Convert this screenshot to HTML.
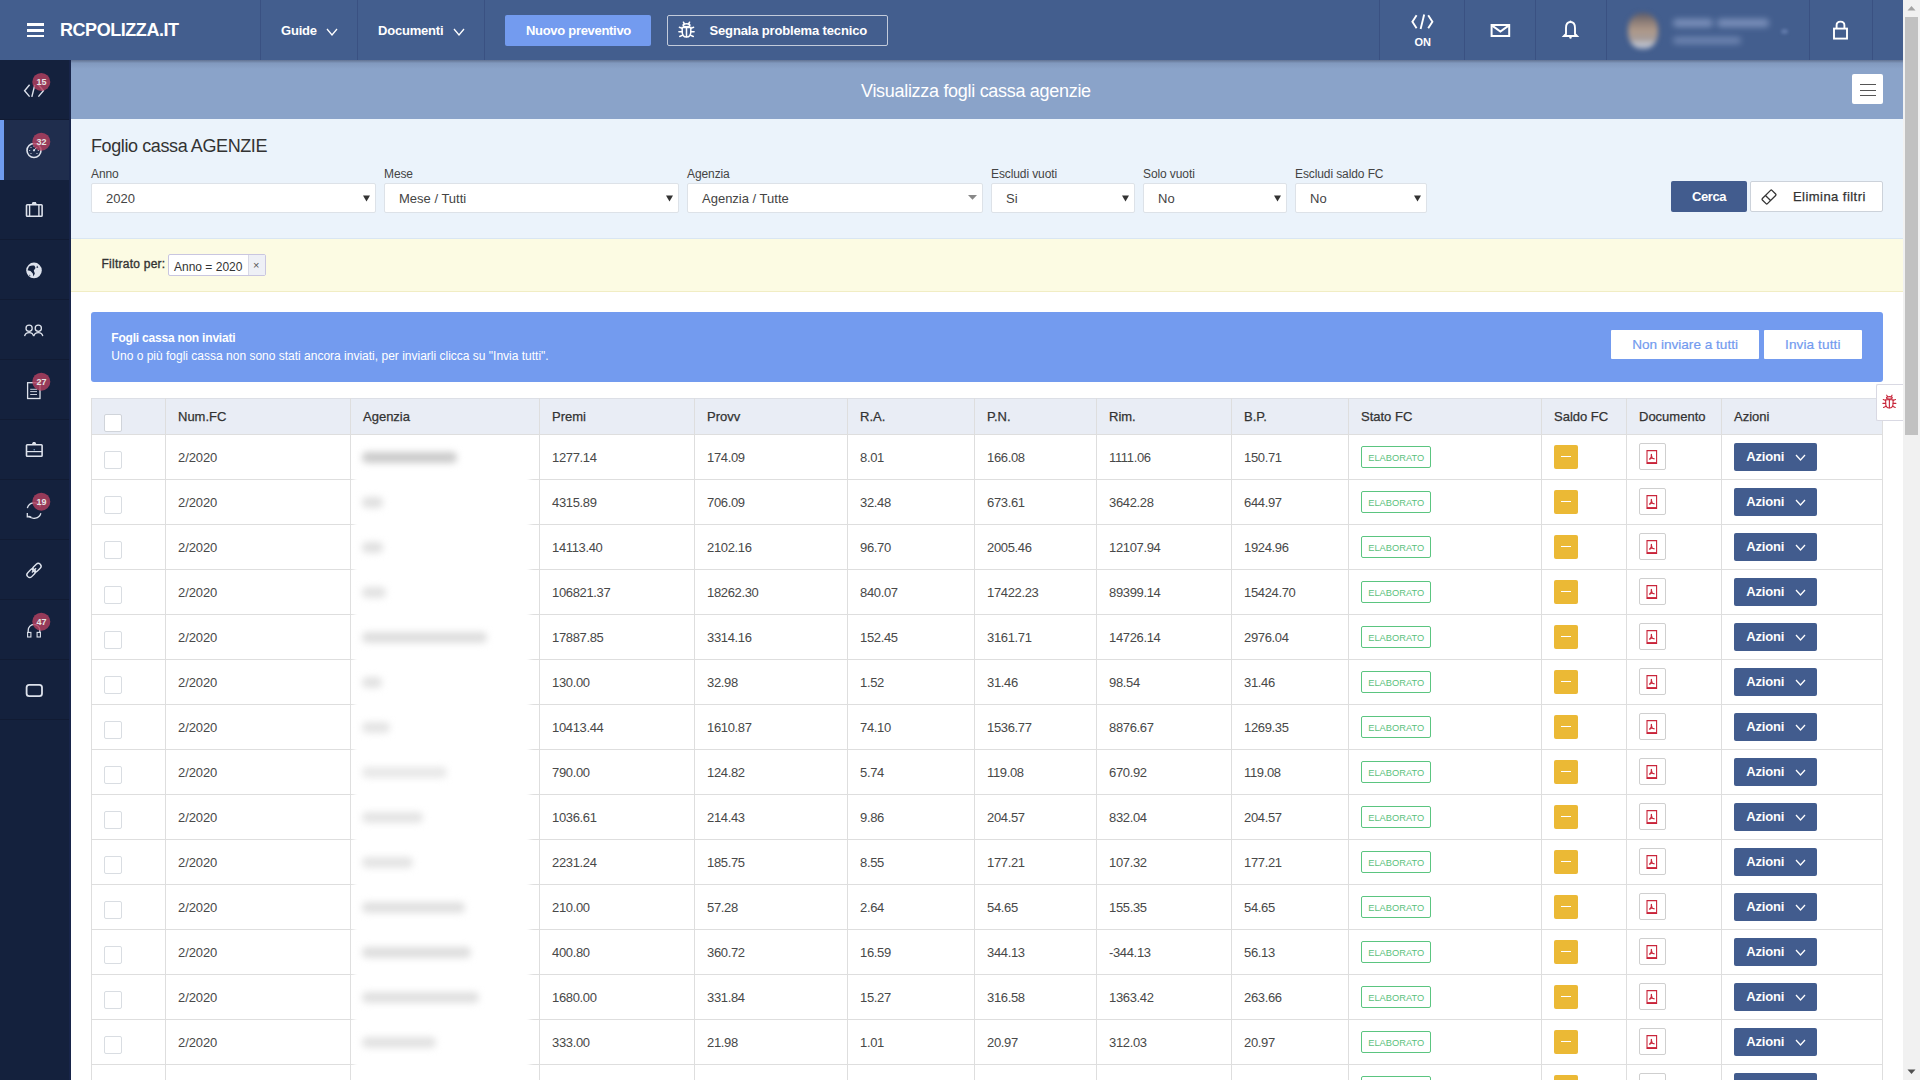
<!DOCTYPE html><html><head><meta charset="utf-8"><style>
*{box-sizing:border-box;margin:0;padding:0}
html,body{width:1920px;height:1080px;overflow:hidden;background:#fff;font-family:"Liberation Sans", sans-serif;}
.a{position:absolute}
.t{position:absolute;white-space:nowrap;line-height:1}
</style></head><body><div class="a" style="left:0px;top:0px;width:1903px;height:60px;background:#435e8e"></div><div class="a" style="left:260px;top:0px;width:1px;height:60px;background:#3a5182"></div><div class="a" style="left:357px;top:0px;width:1px;height:60px;background:#3a5182"></div><div class="a" style="left:484px;top:0px;width:1px;height:60px;background:#3a5182"></div><div class="a" style="left:1379px;top:0px;width:1px;height:60px;background:#3a5182"></div><div class="a" style="left:1464px;top:0px;width:1px;height:60px;background:#3a5182"></div><div class="a" style="left:1535px;top:0px;width:1px;height:60px;background:#3a5182"></div><div class="a" style="left:1606px;top:0px;width:1px;height:60px;background:#3a5182"></div><div class="a" style="left:1809px;top:0px;width:1px;height:60px;background:#3a5182"></div><div class="a" style="left:1872px;top:0px;width:1px;height:60px;background:#3a5182"></div><div class="a" style="left:27px;top:23px;width:17px;height:2.8px;background:#fff"></div><div class="a" style="left:27px;top:29px;width:17px;height:2.8px;background:#fff"></div><div class="a" style="left:27px;top:34.5px;width:17px;height:2.8px;background:#fff"></div><div class="t" style="left:60px;top:21.15px;font-size:18px;color:#fff;font-weight:bold;letter-spacing:-0.45px;">RCPOLIZZA.IT</div><div class="t" style="left:281px;top:24.24px;font-size:13px;color:#fff;font-weight:bold;letter-spacing:-0.2px;">Guide</div><div class="t" style="left:378px;top:24.24px;font-size:13px;color:#fff;font-weight:bold;letter-spacing:-0.2px;">Documenti</div><svg class="a" style="left:326px;top:27.5px" width="12" height="8" viewBox="-1 -1 12 8"><path d="M0 0 L5.0 6 L10 0" fill="none" stroke="#fff" stroke-width="1.3"/></svg><svg class="a" style="left:453px;top:27.5px" width="12" height="8" viewBox="-1 -1 12 8"><path d="M0 0 L5.0 6 L10 0" fill="none" stroke="#fff" stroke-width="1.3"/></svg><div class="a" style="left:505px;top:15px;width:146px;height:31px;background:#739bef;border-radius:2px"></div><div class="t" style="left:526px;top:24.24px;font-size:13px;color:#fff;font-weight:bold;letter-spacing:-0.3px;">Nuovo preventivo</div><div class="a" style="left:667px;top:15px;width:221px;height:31px;border:1px solid #c3cbdb;border-radius:2px"></div><div class="t" style="left:709.5px;top:24.24px;font-size:13px;color:#fff;font-weight:bold;letter-spacing:-0.15px;">Segnala problema tecnico</div><svg class="a" style="left:0;top:0" width="1903" height="60" viewBox="0 0 1903 60"><g transform="translate(678.5 20.8) scale(1.0)" fill="none" stroke="#fff" stroke-width="1.5" stroke-linecap="round"><ellipse cx="8" cy="4.5" rx="3.4" ry="1.5"/><path d="M4.9 1.4 L6 3.2 M11.1 1.4 L10 3.2"/><path d="M3.7 6.7 H12.3 V11 C12.3 14.5 10.5 16.3 8 16.3 C5.5 16.3 3.7 14.5 3.7 11 Z"/><line x1="8" y1="6.8" x2="8" y2="16"/><path d="M3.7 7.6 L0.9 6.4 M12.3 7.6 L15.1 6.4 M3.7 10.9 L0.4 10.9 M12.3 10.9 L15.6 10.9 M4.2 14.3 L1.2 15.7 M11.8 14.3 L14.8 15.7"/></g><g fill="none" stroke="#fff" stroke-width="1.9"><polyline points="1416.6,15.2 1412.4,21.7 1416.6,28.2"/><line x1="1424.2" y1="14.5" x2="1420.6" y2="29"/><polyline points="1428.2,15.2 1432.4,21.7 1428.2,28.2"/></g><g fill="none" stroke="#fff" stroke-width="2"><rect x="1491.6" y="25" width="17.6" height="11"/><polyline points="1491.8,25.4 1500.4,31.6 1509,25.4"/></g><g fill="none" stroke="#fff" stroke-width="1.9"><path d="M1564 36 L1566 34 L1566 28 C1566 23.5 1568 22 1570.5 22 C1573 22 1575 23.5 1575 28 L1575 34 L1577 36 Z"/><circle cx="1570.5" cy="37.6" r="1.2" fill="#fff" stroke="none"/><circle cx="1570.5" cy="21.4" r="1" fill="#fff" stroke="none"/></g><g fill="none" stroke="#fff" stroke-width="1.9"><rect x="1834" y="28.6" width="13" height="10"/><path d="M1836.6 28.6 V25.2 C1836.6 22.6 1838.3 21.6 1840.5 21.6 C1842.7 21.6 1844.4 22.6 1844.4 25.2 V28.6"/></g></svg><div class="t" style="left:1414.5px;top:36.56px;font-size:11px;color:#fff;font-weight:bold;">ON</div><div class="a" style="left:1628px;top:13px;width:30px;height:36px;border-radius:45%;background:linear-gradient(#5f5c68 0%,#8f7f78 25%,#b09a8a 50%,#a49a98 72%,#c3c6cf 88%,#9ea8c0 100%);filter:blur(2.6px)"></div><div class="a" style="left:1673px;top:19px;width:40px;height:8px;background:#8599c2;filter:blur(3px);border-radius:4px;opacity:0.85"></div><div class="a" style="left:1717px;top:19px;width:52px;height:8px;background:#8599c2;filter:blur(3px);border-radius:4px;opacity:0.85"></div><div class="a" style="left:1673px;top:37px;width:68px;height:7px;background:#778db8;filter:blur(3px);border-radius:4px;opacity:0.85"></div><div class="a" style="left:1781px;top:29px;width:7px;height:5px;background:#5f78a8;filter:blur(1.5px);border-radius:3px"></div><div class="a" style="left:0px;top:60px;width:71px;height:1020px;background:#14213d"></div><div class="a" style="left:0px;top:119px;width:71px;height:1px;background:#111b33"></div><div class="a" style="left:0px;top:179px;width:71px;height:1px;background:#111b33"></div><div class="a" style="left:0px;top:239px;width:71px;height:1px;background:#111b33"></div><div class="a" style="left:0px;top:299px;width:71px;height:1px;background:#111b33"></div><div class="a" style="left:0px;top:359px;width:71px;height:1px;background:#111b33"></div><div class="a" style="left:0px;top:419px;width:71px;height:1px;background:#111b33"></div><div class="a" style="left:0px;top:479px;width:71px;height:1px;background:#111b33"></div><div class="a" style="left:0px;top:539px;width:71px;height:1px;background:#111b33"></div><div class="a" style="left:0px;top:599px;width:71px;height:1px;background:#111b33"></div><div class="a" style="left:0px;top:659px;width:71px;height:1px;background:#111b33"></div><div class="a" style="left:0px;top:719px;width:71px;height:1px;background:#111b33"></div><div class="a" style="left:0px;top:120px;width:71px;height:60px;background:#1f2d4d"></div><div class="a" style="left:0px;top:120px;width:4px;height:60px;background:#6f9cf0"></div><div class="a" style="left:69px;top:60px;width:2px;height:1020px;background:#18254a"></div><svg class="a" style="left:0;top:0" width="71" height="720" viewBox="0 0 71 720"><polyline points="29.6,84.8 24.6,90.7 29.6,96.6" fill="none" stroke="#dde2ec" stroke-width="1.4"/><line x1="34.8" y1="84.8" x2="31.8" y2="96.8" fill="none" stroke="#dde2ec" stroke-width="1.4"/><polyline points="38.4,84.8 43.4,90.7 38.4,96.6" fill="none" stroke="#dde2ec" stroke-width="1.4"/><circle cx="34" cy="150.5" r="7" fill="none" stroke="#dde2ec" stroke-width="1.6"/><circle cx="34" cy="150.3" r="1.1" fill="#dde2ec"/><circle cx="29.7" cy="150.5" r="0.6" fill="#dde2ec"/><circle cx="38.3" cy="150.5" r="0.6" fill="#dde2ec"/><circle cx="34" cy="146.2" r="0.6" fill="#dde2ec"/><circle cx="31" cy="147.5" r="0.6" fill="#dde2ec"/><circle cx="37" cy="147.5" r="0.6" fill="#dde2ec"/><circle cx="31" cy="153.5" r="0.6" fill="#dde2ec"/><circle cx="37" cy="153.5" r="0.6" fill="#dde2ec"/><line x1="34" y1="150.3" x2="37" y2="147" fill="none" stroke="#dde2ec" stroke-width="1"/><rect x="26.5" y="204.7" width="15.6" height="11.6" fill="none" stroke="#dde2ec" stroke-width="1.6" rx="0.8"/><line x1="29.6" y1="205" x2="29.6" y2="216" fill="none" stroke="#dde2ec" stroke-width="1.4"/><line x1="38.9" y1="205" x2="38.9" y2="216" fill="none" stroke="#dde2ec" stroke-width="1.4"/><path d="M31.6 204.2 L32.6 202 L35.8 202 L36.8 204.2 Z" fill="#dde2ec"/><circle cx="34" cy="270.4" r="7.8" fill="#dde2ec"/><path d="M29 266.5 C30.5 265.8 32.5 265.2 34.5 265.8 L35.5 268 L33.8 270.5 L34.8 273.5 L33.5 276.5 L32.8 273.5 L30.5 271 L27.5 270.3 Z" fill="#14213d"/><path d="M37 265.5 L36.5 268 L38.3 267.5 Z" fill="#14213d"/><path d="M29 274.5 L30.5 275.8 L29.8 276.5 Z" fill="#14213d"/><circle cx="29.1" cy="328.2" r="3.1" fill="none" stroke="#dde2ec" stroke-width="1.3"/><circle cx="38.3" cy="328.2" r="3.1" fill="none" stroke="#dde2ec" stroke-width="1.3"/><path d="M24.6 336.2 A4.6 4.6 0 0 1 33.6 336.2" fill="none" stroke="#dde2ec" stroke-width="1.3"/><path d="M33.8 336.2 A4.6 4.6 0 0 1 42.8 336.2" fill="none" stroke="#dde2ec" stroke-width="1.3"/><rect x="27.6" y="382.7" width="12.4" height="15.8" fill="none" stroke="#dde2ec" stroke-width="1.3"/><line x1="30.2" y1="389.3" x2="37" y2="389.3" fill="none" stroke="#dde2ec" stroke-width="0.9"/><line x1="30.2" y1="391.6" x2="37" y2="391.6" fill="none" stroke="#dde2ec" stroke-width="0.9"/><line x1="30.2" y1="394.5" x2="37" y2="394.5" fill="none" stroke="#dde2ec" stroke-width="0.9"/><rect x="26.5" y="444.7" width="15.6" height="11.6" fill="none" stroke="#dde2ec" stroke-width="1.6" rx="0.8"/><line x1="26.5" y1="451.6" x2="42.1" y2="451.6" fill="none" stroke="#dde2ec" stroke-width="1.2"/><path d="M31.8 444.2 L33 442 L35.2 442 L36.4 444.2 Z" fill="#dde2ec"/><circle cx="34.2" cy="449.7" r="0.7" fill="#7fb0d0"/><path d="M27.3 508.2 A7.2 7.2 0 0 1 40.5 506.5" fill="none" stroke="#dde2ec" stroke-width="1.3"/><path d="M40.9 513.3 A7.2 7.2 0 0 1 28.5 515.8" fill="none" stroke="#dde2ec" stroke-width="1.3"/><path d="M27.3 513 L27.3 516.8 L31.3 516.8" fill="none" stroke="#dde2ec" stroke-width="1.3"/><g transform="rotate(-45 34 570.4)"><rect x="25.2" y="567.6" width="9.6" height="5.6" rx="2.8" fill="none" stroke="#dde2ec" stroke-width="1.4"/><rect x="33.2" y="567.6" width="9.6" height="5.6" rx="2.8" fill="none" stroke="#dde2ec" stroke-width="1.4"/><line x1="31" y1="570.4" x2="37" y2="570.4" fill="none" stroke="#dde2ec" stroke-width="1.2"/></g><path d="M28.2 633 V630.2 A5.8 5.8 0 0 1 39.8 630.2 V633" fill="none" stroke="#dde2ec" stroke-width="1.3"/><rect x="27.6" y="632.4" width="3.3" height="4.6" fill="none" stroke="#dde2ec" stroke-width="1.1"/><rect x="37.1" y="632.4" width="3.3" height="4.6" fill="none" stroke="#dde2ec" stroke-width="1.1"/><rect x="26.6" y="684.9" width="15.4" height="11.2" rx="2.6" fill="none" stroke="#dde2ec" stroke-width="1.8"/><circle cx="41.3" cy="81.9" r="9" fill="#b3405f" fill-opacity="0.82"/><text x="41.5" y="85.3" font-family="Liberation Sans" font-size="9" font-weight="bold" fill="#e6e6e6" text-anchor="middle">15</text><circle cx="41.3" cy="141.7" r="9" fill="#b3405f" fill-opacity="0.82"/><text x="41.5" y="145.1" font-family="Liberation Sans" font-size="9" font-weight="bold" fill="#e6e6e6" text-anchor="middle">32</text><circle cx="41.3" cy="381.7" r="9" fill="#b3405f" fill-opacity="0.82"/><text x="41.5" y="385.1" font-family="Liberation Sans" font-size="9" font-weight="bold" fill="#e6e6e6" text-anchor="middle">27</text><circle cx="41.3" cy="501.7" r="9" fill="#b3405f" fill-opacity="0.82"/><text x="41.5" y="505.1" font-family="Liberation Sans" font-size="9" font-weight="bold" fill="#e6e6e6" text-anchor="middle">19</text><circle cx="41.3" cy="621.7" r="9" fill="#b3405f" fill-opacity="0.82"/><text x="41.5" y="625.1" font-family="Liberation Sans" font-size="9" font-weight="bold" fill="#e6e6e6" text-anchor="middle">47</text></svg><div class="a" style="left:71px;top:60px;width:1832px;height:59px;background:#8aa3c9"></div><div class="a" style="left:71px;top:60px;width:1832px;height:9px;background:linear-gradient(rgba(70,82,110,0.6),rgba(110,130,165,0.3) 35%,rgba(138,163,201,0))"></div><div class="t" style="left:861px;top:82.15px;font-size:18px;color:#fff;font-weight:normal;letter-spacing:-0.3px;">Visualizza fogli cassa agenzie</div><div class="a" style="left:1852px;top:74px;width:31px;height:30px;background:#fff;border-radius:2px"></div><div class="a" style="left:1860px;top:84px;width:16px;height:1.2px;background:#555"></div><div class="a" style="left:1860px;top:89.5px;width:16px;height:1.2px;background:#555"></div><div class="a" style="left:1860px;top:95px;width:16px;height:1.2px;background:#555"></div><div class="a" style="left:71px;top:119px;width:1832px;height:119px;background:#ebf3fb"></div><div class="t" style="left:91px;top:137.15px;font-size:18px;color:#333;font-weight:normal;letter-spacing:-0.4px;">Foglio cassa AGENZIE</div><div class="t" style="left:91px;top:168.1px;font-size:12px;color:#444;font-weight:normal;letter-spacing:-0.1px;">Anno</div><div class="a" style="left:91px;top:183px;width:285px;height:30px;background:#fff;border:1px solid #dde2e8;border-radius:2px"></div><div class="t" style="left:106px;top:191.54px;font-size:13px;color:#444;font-weight:normal;">2020</div><svg class="a" style="left:363px;top:194.5px" width="7" height="7" viewBox="0 0 7 7"><path d="M0 0.5 H7 L3.5 6.5 Z" fill="#333"/></svg><div class="t" style="left:384px;top:168.1px;font-size:12px;color:#444;font-weight:normal;letter-spacing:-0.1px;">Mese</div><div class="a" style="left:384px;top:183px;width:295px;height:30px;background:#fff;border:1px solid #dde2e8;border-radius:2px"></div><div class="t" style="left:399px;top:191.54px;font-size:13px;color:#444;font-weight:normal;">Mese / Tutti</div><svg class="a" style="left:666px;top:194.5px" width="7" height="7" viewBox="0 0 7 7"><path d="M0 0.5 H7 L3.5 6.5 Z" fill="#333"/></svg><div class="t" style="left:687px;top:168.1px;font-size:12px;color:#444;font-weight:normal;letter-spacing:-0.1px;">Agenzia</div><div class="a" style="left:687px;top:183px;width:296px;height:30px;background:#fff;border:1px solid #dde2e8;border-radius:2px"></div><div class="t" style="left:702px;top:191.54px;font-size:13px;color:#444;font-weight:normal;">Agenzia / Tutte</div><svg class="a" style="left:968px;top:195px" width="9" height="5" viewBox="0 0 9 5"><path d="M0 0 H9 L4.5 4.8 Z" fill="#888"/></svg><div class="t" style="left:991px;top:168.1px;font-size:12px;color:#444;font-weight:normal;letter-spacing:-0.1px;">Escludi vuoti</div><div class="a" style="left:991px;top:183px;width:144px;height:30px;background:#fff;border:1px solid #dde2e8;border-radius:2px"></div><div class="t" style="left:1006px;top:191.54px;font-size:13px;color:#444;font-weight:normal;">Si</div><svg class="a" style="left:1122px;top:194.5px" width="7" height="7" viewBox="0 0 7 7"><path d="M0 0.5 H7 L3.5 6.5 Z" fill="#333"/></svg><div class="t" style="left:1143px;top:168.1px;font-size:12px;color:#444;font-weight:normal;letter-spacing:-0.1px;">Solo vuoti</div><div class="a" style="left:1143px;top:183px;width:144px;height:30px;background:#fff;border:1px solid #dde2e8;border-radius:2px"></div><div class="t" style="left:1158px;top:191.54px;font-size:13px;color:#444;font-weight:normal;">No</div><svg class="a" style="left:1274px;top:194.5px" width="7" height="7" viewBox="0 0 7 7"><path d="M0 0.5 H7 L3.5 6.5 Z" fill="#333"/></svg><div class="t" style="left:1295px;top:168.1px;font-size:12px;color:#444;font-weight:normal;letter-spacing:-0.1px;">Escludi saldo FC</div><div class="a" style="left:1295px;top:183px;width:132px;height:30px;background:#fff;border:1px solid #dde2e8;border-radius:2px"></div><div class="t" style="left:1310px;top:191.54px;font-size:13px;color:#444;font-weight:normal;">No</div><svg class="a" style="left:1414px;top:194.5px" width="7" height="7" viewBox="0 0 7 7"><path d="M0 0.5 H7 L3.5 6.5 Z" fill="#333"/></svg><div class="a" style="left:1671px;top:181px;width:76px;height:31px;background:#425c8e;border-radius:2px"></div><div class="t" style="left:1692px;top:189.94px;font-size:13px;color:#fff;font-weight:bold;letter-spacing:-0.4px;">Cerca</div><div class="a" style="left:1750px;top:181px;width:133px;height:31px;background:#fff;border:1px solid #ccd2da;border-radius:2px"></div><div class="t" style="left:1793px;top:189.94px;font-size:13px;color:#333;font-weight:normal;letter-spacing:0.45px;-webkit-text-stroke:0.25px #333;">Elimina filtri</div><svg class="a" style="left:1759px;top:187px" width="20" height="20" viewBox="0 0 20 20"><g transform="rotate(-45 10 10)" fill="none" stroke="#333" stroke-width="1.3" stroke-linejoin="round"><rect x="3.2" y="6.4" width="13.6" height="7.2" rx="1"/><line x1="8.6" y1="6.4" x2="8.6" y2="13.6"/></g></svg><div class="a" style="left:71px;top:238px;width:1832px;height:54px;background:#fcfbe3;border-top:1px solid #d9e6f2;border-bottom:1px solid #f1edc4"></div><div class="t" style="left:101.5px;top:258.1px;font-size:12px;color:#333;font-weight:normal;letter-spacing:0.25px;-webkit-text-stroke:0.35px #333;">Filtrato per:</div><div class="a" style="left:168px;top:254px;width:98px;height:22px;background:#fff;border:1px solid #c9c6e0;border-radius:2px"></div><div class="a" style="left:248px;top:255px;width:17px;height:20px;background:#eef0f6;border-left:1px solid #d9d9e6"></div><div class="t" style="left:174px;top:261.1px;font-size:12px;color:#333;font-weight:normal;">Anno = 2020</div><div class="t" style="left:253px;top:259.76px;font-size:11px;color:#555;font-weight:normal;">&times;</div><div class="a" style="left:91px;top:312px;width:1792px;height:70px;background:#739bef;border-radius:3px"></div><div class="t" style="left:111.3px;top:331.9px;font-size:12px;color:#fff;font-weight:bold;letter-spacing:-0.2px;">Fogli cassa non inviati</div><div class="t" style="left:111.3px;top:349.7px;font-size:12px;color:#fff;font-weight:normal;">Uno o più fogli cassa non sono stati ancora inviati, per inviarli clicca su "Invia tutti".</div><div class="a" style="left:1611px;top:330px;width:148px;height:29px;background:#fff;border-radius:1px"></div><div class="t" style="left:1632.2px;top:337.64px;font-size:13.6px;color:#739bef;font-weight:normal;-webkit-text-stroke:0.2px #739bef;">Non inviare a tutti</div><div class="a" style="left:1764px;top:330px;width:98px;height:29px;background:#fff;border-radius:1px"></div><div class="t" style="left:1785px;top:337.64px;font-size:13.6px;color:#739bef;font-weight:normal;letter-spacing:0.1px;-webkit-text-stroke:0.2px #739bef;">Invia tutti</div><div class="a" style="left:91px;top:398px;width:1792px;height:36px;background:#e9edf5"></div><div class="a" style="left:91px;top:398px;width:1792px;height:1px;background:#dcdfe6"></div><div class="a" style="left:91px;top:434px;width:1792px;height:1px;background:#dedede"></div><div class="a" style="left:91px;top:479px;width:1792px;height:1px;background:#dedede"></div><div class="a" style="left:91px;top:524px;width:1792px;height:1px;background:#dedede"></div><div class="a" style="left:91px;top:569px;width:1792px;height:1px;background:#dedede"></div><div class="a" style="left:91px;top:614px;width:1792px;height:1px;background:#dedede"></div><div class="a" style="left:91px;top:659px;width:1792px;height:1px;background:#dedede"></div><div class="a" style="left:91px;top:704px;width:1792px;height:1px;background:#dedede"></div><div class="a" style="left:91px;top:749px;width:1792px;height:1px;background:#dedede"></div><div class="a" style="left:91px;top:794px;width:1792px;height:1px;background:#dedede"></div><div class="a" style="left:91px;top:839px;width:1792px;height:1px;background:#dedede"></div><div class="a" style="left:91px;top:884px;width:1792px;height:1px;background:#dedede"></div><div class="a" style="left:91px;top:929px;width:1792px;height:1px;background:#dedede"></div><div class="a" style="left:91px;top:974px;width:1792px;height:1px;background:#dedede"></div><div class="a" style="left:91px;top:1019px;width:1792px;height:1px;background:#dedede"></div><div class="a" style="left:91px;top:1064px;width:1792px;height:1px;background:#dedede"></div><div class="a" style="left:91px;top:1109px;width:1792px;height:1px;background:#dedede"></div><div class="a" style="left:91px;top:398px;width:1px;height:682px;background:#dedede"></div><div class="a" style="left:165px;top:398px;width:1px;height:682px;background:#dedede"></div><div class="a" style="left:350px;top:398px;width:1px;height:682px;background:#dedede"></div><div class="a" style="left:539px;top:398px;width:1px;height:682px;background:#dedede"></div><div class="a" style="left:694px;top:398px;width:1px;height:682px;background:#dedede"></div><div class="a" style="left:847px;top:398px;width:1px;height:682px;background:#dedede"></div><div class="a" style="left:974px;top:398px;width:1px;height:682px;background:#dedede"></div><div class="a" style="left:1096px;top:398px;width:1px;height:682px;background:#dedede"></div><div class="a" style="left:1231px;top:398px;width:1px;height:682px;background:#dedede"></div><div class="a" style="left:1348px;top:398px;width:1px;height:682px;background:#dedede"></div><div class="a" style="left:1541px;top:398px;width:1px;height:682px;background:#dedede"></div><div class="a" style="left:1626px;top:398px;width:1px;height:682px;background:#dedede"></div><div class="a" style="left:1721px;top:398px;width:1px;height:682px;background:#dedede"></div><div class="a" style="left:1882px;top:398px;width:1px;height:682px;background:#dedede"></div><div class="t" style="left:178px;top:410.44px;font-size:13px;color:#333;font-weight:normal;-webkit-text-stroke:0.25px #333;">Num.FC</div><div class="t" style="left:363px;top:410.44px;font-size:13px;color:#333;font-weight:normal;-webkit-text-stroke:0.25px #333;">Agenzia</div><div class="t" style="left:552px;top:410.44px;font-size:13px;color:#333;font-weight:normal;-webkit-text-stroke:0.25px #333;">Premi</div><div class="t" style="left:707px;top:410.44px;font-size:13px;color:#333;font-weight:normal;-webkit-text-stroke:0.25px #333;">Provv</div><div class="t" style="left:860px;top:410.44px;font-size:13px;color:#333;font-weight:normal;-webkit-text-stroke:0.25px #333;">R.A.</div><div class="t" style="left:987px;top:410.44px;font-size:13px;color:#333;font-weight:normal;-webkit-text-stroke:0.25px #333;">P.N.</div><div class="t" style="left:1109px;top:410.44px;font-size:13px;color:#333;font-weight:normal;-webkit-text-stroke:0.25px #333;">Rim.</div><div class="t" style="left:1244px;top:410.44px;font-size:13px;color:#333;font-weight:normal;-webkit-text-stroke:0.25px #333;">B.P.</div><div class="t" style="left:1361px;top:410.44px;font-size:13px;color:#333;font-weight:normal;-webkit-text-stroke:0.25px #333;">Stato FC</div><div class="t" style="left:1554px;top:410.44px;font-size:13px;color:#333;font-weight:normal;-webkit-text-stroke:0.25px #333;">Saldo FC</div><div class="t" style="left:1639px;top:410.44px;font-size:13px;color:#333;font-weight:normal;-webkit-text-stroke:0.25px #333;">Documento</div><div class="t" style="left:1734px;top:410.44px;font-size:13px;color:#333;font-weight:normal;-webkit-text-stroke:0.25px #333;">Azioni</div><div class="a" style="left:104px;top:414px;width:18px;height:18px;background:#fff;border:1px solid #d0d4da;border-radius:2px"></div><div class="a" style="left:104px;top:451px;width:18px;height:18px;background:#fff;border:1px solid #d9dde2;border-radius:2px"></div><div class="t" style="left:178px;top:450.74px;font-size:13px;color:#484848;font-weight:normal;letter-spacing:-0.1px;">2/2020</div><div class="t" style="left:552px;top:450.74px;font-size:13px;color:#484848;font-weight:normal;letter-spacing:-0.35px;">1277.14</div><div class="t" style="left:707px;top:450.74px;font-size:13px;color:#484848;font-weight:normal;letter-spacing:-0.35px;">174.09</div><div class="t" style="left:860px;top:450.74px;font-size:13px;color:#484848;font-weight:normal;letter-spacing:-0.35px;">8.01</div><div class="t" style="left:987px;top:450.74px;font-size:13px;color:#484848;font-weight:normal;letter-spacing:-0.35px;">166.08</div><div class="t" style="left:1109px;top:450.74px;font-size:13px;color:#484848;font-weight:normal;letter-spacing:-0.35px;">1111.06</div><div class="t" style="left:1244px;top:450.74px;font-size:13px;color:#484848;font-weight:normal;letter-spacing:-0.35px;">150.71</div><div class="a" style="left:1361px;top:446px;width:70px;height:22px;border:1px solid #5bc580;border-radius:2px;background:#fff"></div><div class="t" style="left:1368.2px;top:453.53px;font-size:9.3px;color:#5bbf7c;font-weight:normal;">ELABORATO</div><div class="a" style="left:1554px;top:445px;width:24px;height:24px;background:#ebb935;border-radius:2px"></div><div class="a" style="left:1561px;top:456px;width:10px;height:1.3px;background:#fff"></div><div class="a" style="left:1639px;top:443px;width:27px;height:27px;background:#fff;border:1px solid #cfcfcf;border-radius:2px"></div><svg class="a" style="left:1646px;top:450px" width="12" height="15" viewBox="0 0 12 15"><g fill="none" stroke="#c9253a"><path d="M1 0.6 H10.6 V13.4 H1 Z" stroke-width="1.1"/><line x1="1" y1="13" x2="10.6" y2="13" stroke-width="1.8"/><path d="M5.3 4 C5.8 5.5 6 7 3.3 9.5 M5.2 8 L8.6 8.8 M4.2 9 L6.6 6.8" stroke-width="1.2"/></g></svg><div class="a" style="left:1734px;top:443px;width:83px;height:28px;background:#425c8e;border-radius:2px"></div><div class="t" style="left:1746.3px;top:449.54px;font-size:13px;color:#fff;font-weight:bold;letter-spacing:-0.2px;">Azioni</div><svg class="a" style="left:1795px;top:454px" width="11" height="7" viewBox="-1 -1 11 7"><path d="M0 0 L4.5 5 L9 0" fill="none" stroke="#fff" stroke-width="1.3"/></svg><div class="a" style="left:104px;top:496px;width:18px;height:18px;background:#fff;border:1px solid #d9dde2;border-radius:2px"></div><div class="t" style="left:178px;top:495.74px;font-size:13px;color:#484848;font-weight:normal;letter-spacing:-0.1px;">2/2020</div><div class="t" style="left:552px;top:495.74px;font-size:13px;color:#484848;font-weight:normal;letter-spacing:-0.35px;">4315.89</div><div class="t" style="left:707px;top:495.74px;font-size:13px;color:#484848;font-weight:normal;letter-spacing:-0.35px;">706.09</div><div class="t" style="left:860px;top:495.74px;font-size:13px;color:#484848;font-weight:normal;letter-spacing:-0.35px;">32.48</div><div class="t" style="left:987px;top:495.74px;font-size:13px;color:#484848;font-weight:normal;letter-spacing:-0.35px;">673.61</div><div class="t" style="left:1109px;top:495.74px;font-size:13px;color:#484848;font-weight:normal;letter-spacing:-0.35px;">3642.28</div><div class="t" style="left:1244px;top:495.74px;font-size:13px;color:#484848;font-weight:normal;letter-spacing:-0.35px;">644.97</div><div class="a" style="left:1361px;top:491px;width:70px;height:22px;border:1px solid #5bc580;border-radius:2px;background:#fff"></div><div class="t" style="left:1368.2px;top:498.53px;font-size:9.3px;color:#5bbf7c;font-weight:normal;">ELABORATO</div><div class="a" style="left:1554px;top:490px;width:24px;height:24px;background:#ebb935;border-radius:2px"></div><div class="a" style="left:1561px;top:501px;width:10px;height:1.3px;background:#fff"></div><div class="a" style="left:1639px;top:488px;width:27px;height:27px;background:#fff;border:1px solid #cfcfcf;border-radius:2px"></div><svg class="a" style="left:1646px;top:495px" width="12" height="15" viewBox="0 0 12 15"><g fill="none" stroke="#c9253a"><path d="M1 0.6 H10.6 V13.4 H1 Z" stroke-width="1.1"/><line x1="1" y1="13" x2="10.6" y2="13" stroke-width="1.8"/><path d="M5.3 4 C5.8 5.5 6 7 3.3 9.5 M5.2 8 L8.6 8.8 M4.2 9 L6.6 6.8" stroke-width="1.2"/></g></svg><div class="a" style="left:1734px;top:488px;width:83px;height:28px;background:#425c8e;border-radius:2px"></div><div class="t" style="left:1746.3px;top:494.54px;font-size:13px;color:#fff;font-weight:bold;letter-spacing:-0.2px;">Azioni</div><svg class="a" style="left:1795px;top:499px" width="11" height="7" viewBox="-1 -1 11 7"><path d="M0 0 L4.5 5 L9 0" fill="none" stroke="#fff" stroke-width="1.3"/></svg><div class="a" style="left:104px;top:541px;width:18px;height:18px;background:#fff;border:1px solid #d9dde2;border-radius:2px"></div><div class="t" style="left:178px;top:540.74px;font-size:13px;color:#484848;font-weight:normal;letter-spacing:-0.1px;">2/2020</div><div class="t" style="left:552px;top:540.74px;font-size:13px;color:#484848;font-weight:normal;letter-spacing:-0.35px;">14113.40</div><div class="t" style="left:707px;top:540.74px;font-size:13px;color:#484848;font-weight:normal;letter-spacing:-0.35px;">2102.16</div><div class="t" style="left:860px;top:540.74px;font-size:13px;color:#484848;font-weight:normal;letter-spacing:-0.35px;">96.70</div><div class="t" style="left:987px;top:540.74px;font-size:13px;color:#484848;font-weight:normal;letter-spacing:-0.35px;">2005.46</div><div class="t" style="left:1109px;top:540.74px;font-size:13px;color:#484848;font-weight:normal;letter-spacing:-0.35px;">12107.94</div><div class="t" style="left:1244px;top:540.74px;font-size:13px;color:#484848;font-weight:normal;letter-spacing:-0.35px;">1924.96</div><div class="a" style="left:1361px;top:536px;width:70px;height:22px;border:1px solid #5bc580;border-radius:2px;background:#fff"></div><div class="t" style="left:1368.2px;top:543.53px;font-size:9.3px;color:#5bbf7c;font-weight:normal;">ELABORATO</div><div class="a" style="left:1554px;top:535px;width:24px;height:24px;background:#ebb935;border-radius:2px"></div><div class="a" style="left:1561px;top:546px;width:10px;height:1.3px;background:#fff"></div><div class="a" style="left:1639px;top:533px;width:27px;height:27px;background:#fff;border:1px solid #cfcfcf;border-radius:2px"></div><svg class="a" style="left:1646px;top:540px" width="12" height="15" viewBox="0 0 12 15"><g fill="none" stroke="#c9253a"><path d="M1 0.6 H10.6 V13.4 H1 Z" stroke-width="1.1"/><line x1="1" y1="13" x2="10.6" y2="13" stroke-width="1.8"/><path d="M5.3 4 C5.8 5.5 6 7 3.3 9.5 M5.2 8 L8.6 8.8 M4.2 9 L6.6 6.8" stroke-width="1.2"/></g></svg><div class="a" style="left:1734px;top:533px;width:83px;height:28px;background:#425c8e;border-radius:2px"></div><div class="t" style="left:1746.3px;top:539.54px;font-size:13px;color:#fff;font-weight:bold;letter-spacing:-0.2px;">Azioni</div><svg class="a" style="left:1795px;top:544px" width="11" height="7" viewBox="-1 -1 11 7"><path d="M0 0 L4.5 5 L9 0" fill="none" stroke="#fff" stroke-width="1.3"/></svg><div class="a" style="left:104px;top:586px;width:18px;height:18px;background:#fff;border:1px solid #d9dde2;border-radius:2px"></div><div class="t" style="left:178px;top:585.74px;font-size:13px;color:#484848;font-weight:normal;letter-spacing:-0.1px;">2/2020</div><div class="t" style="left:552px;top:585.74px;font-size:13px;color:#484848;font-weight:normal;letter-spacing:-0.35px;">106821.37</div><div class="t" style="left:707px;top:585.74px;font-size:13px;color:#484848;font-weight:normal;letter-spacing:-0.35px;">18262.30</div><div class="t" style="left:860px;top:585.74px;font-size:13px;color:#484848;font-weight:normal;letter-spacing:-0.35px;">840.07</div><div class="t" style="left:987px;top:585.74px;font-size:13px;color:#484848;font-weight:normal;letter-spacing:-0.35px;">17422.23</div><div class="t" style="left:1109px;top:585.74px;font-size:13px;color:#484848;font-weight:normal;letter-spacing:-0.35px;">89399.14</div><div class="t" style="left:1244px;top:585.74px;font-size:13px;color:#484848;font-weight:normal;letter-spacing:-0.35px;">15424.70</div><div class="a" style="left:1361px;top:581px;width:70px;height:22px;border:1px solid #5bc580;border-radius:2px;background:#fff"></div><div class="t" style="left:1368.2px;top:588.53px;font-size:9.3px;color:#5bbf7c;font-weight:normal;">ELABORATO</div><div class="a" style="left:1554px;top:580px;width:24px;height:24px;background:#ebb935;border-radius:2px"></div><div class="a" style="left:1561px;top:591px;width:10px;height:1.3px;background:#fff"></div><div class="a" style="left:1639px;top:578px;width:27px;height:27px;background:#fff;border:1px solid #cfcfcf;border-radius:2px"></div><svg class="a" style="left:1646px;top:585px" width="12" height="15" viewBox="0 0 12 15"><g fill="none" stroke="#c9253a"><path d="M1 0.6 H10.6 V13.4 H1 Z" stroke-width="1.1"/><line x1="1" y1="13" x2="10.6" y2="13" stroke-width="1.8"/><path d="M5.3 4 C5.8 5.5 6 7 3.3 9.5 M5.2 8 L8.6 8.8 M4.2 9 L6.6 6.8" stroke-width="1.2"/></g></svg><div class="a" style="left:1734px;top:578px;width:83px;height:28px;background:#425c8e;border-radius:2px"></div><div class="t" style="left:1746.3px;top:584.54px;font-size:13px;color:#fff;font-weight:bold;letter-spacing:-0.2px;">Azioni</div><svg class="a" style="left:1795px;top:589px" width="11" height="7" viewBox="-1 -1 11 7"><path d="M0 0 L4.5 5 L9 0" fill="none" stroke="#fff" stroke-width="1.3"/></svg><div class="a" style="left:104px;top:631px;width:18px;height:18px;background:#fff;border:1px solid #d9dde2;border-radius:2px"></div><div class="t" style="left:178px;top:630.74px;font-size:13px;color:#484848;font-weight:normal;letter-spacing:-0.1px;">2/2020</div><div class="t" style="left:552px;top:630.74px;font-size:13px;color:#484848;font-weight:normal;letter-spacing:-0.35px;">17887.85</div><div class="t" style="left:707px;top:630.74px;font-size:13px;color:#484848;font-weight:normal;letter-spacing:-0.35px;">3314.16</div><div class="t" style="left:860px;top:630.74px;font-size:13px;color:#484848;font-weight:normal;letter-spacing:-0.35px;">152.45</div><div class="t" style="left:987px;top:630.74px;font-size:13px;color:#484848;font-weight:normal;letter-spacing:-0.35px;">3161.71</div><div class="t" style="left:1109px;top:630.74px;font-size:13px;color:#484848;font-weight:normal;letter-spacing:-0.35px;">14726.14</div><div class="t" style="left:1244px;top:630.74px;font-size:13px;color:#484848;font-weight:normal;letter-spacing:-0.35px;">2976.04</div><div class="a" style="left:1361px;top:626px;width:70px;height:22px;border:1px solid #5bc580;border-radius:2px;background:#fff"></div><div class="t" style="left:1368.2px;top:633.53px;font-size:9.3px;color:#5bbf7c;font-weight:normal;">ELABORATO</div><div class="a" style="left:1554px;top:625px;width:24px;height:24px;background:#ebb935;border-radius:2px"></div><div class="a" style="left:1561px;top:636px;width:10px;height:1.3px;background:#fff"></div><div class="a" style="left:1639px;top:623px;width:27px;height:27px;background:#fff;border:1px solid #cfcfcf;border-radius:2px"></div><svg class="a" style="left:1646px;top:630px" width="12" height="15" viewBox="0 0 12 15"><g fill="none" stroke="#c9253a"><path d="M1 0.6 H10.6 V13.4 H1 Z" stroke-width="1.1"/><line x1="1" y1="13" x2="10.6" y2="13" stroke-width="1.8"/><path d="M5.3 4 C5.8 5.5 6 7 3.3 9.5 M5.2 8 L8.6 8.8 M4.2 9 L6.6 6.8" stroke-width="1.2"/></g></svg><div class="a" style="left:1734px;top:623px;width:83px;height:28px;background:#425c8e;border-radius:2px"></div><div class="t" style="left:1746.3px;top:629.54px;font-size:13px;color:#fff;font-weight:bold;letter-spacing:-0.2px;">Azioni</div><svg class="a" style="left:1795px;top:634px" width="11" height="7" viewBox="-1 -1 11 7"><path d="M0 0 L4.5 5 L9 0" fill="none" stroke="#fff" stroke-width="1.3"/></svg><div class="a" style="left:104px;top:676px;width:18px;height:18px;background:#fff;border:1px solid #d9dde2;border-radius:2px"></div><div class="t" style="left:178px;top:675.74px;font-size:13px;color:#484848;font-weight:normal;letter-spacing:-0.1px;">2/2020</div><div class="t" style="left:552px;top:675.74px;font-size:13px;color:#484848;font-weight:normal;letter-spacing:-0.35px;">130.00</div><div class="t" style="left:707px;top:675.74px;font-size:13px;color:#484848;font-weight:normal;letter-spacing:-0.35px;">32.98</div><div class="t" style="left:860px;top:675.74px;font-size:13px;color:#484848;font-weight:normal;letter-spacing:-0.35px;">1.52</div><div class="t" style="left:987px;top:675.74px;font-size:13px;color:#484848;font-weight:normal;letter-spacing:-0.35px;">31.46</div><div class="t" style="left:1109px;top:675.74px;font-size:13px;color:#484848;font-weight:normal;letter-spacing:-0.35px;">98.54</div><div class="t" style="left:1244px;top:675.74px;font-size:13px;color:#484848;font-weight:normal;letter-spacing:-0.35px;">31.46</div><div class="a" style="left:1361px;top:671px;width:70px;height:22px;border:1px solid #5bc580;border-radius:2px;background:#fff"></div><div class="t" style="left:1368.2px;top:678.53px;font-size:9.3px;color:#5bbf7c;font-weight:normal;">ELABORATO</div><div class="a" style="left:1554px;top:670px;width:24px;height:24px;background:#ebb935;border-radius:2px"></div><div class="a" style="left:1561px;top:681px;width:10px;height:1.3px;background:#fff"></div><div class="a" style="left:1639px;top:668px;width:27px;height:27px;background:#fff;border:1px solid #cfcfcf;border-radius:2px"></div><svg class="a" style="left:1646px;top:675px" width="12" height="15" viewBox="0 0 12 15"><g fill="none" stroke="#c9253a"><path d="M1 0.6 H10.6 V13.4 H1 Z" stroke-width="1.1"/><line x1="1" y1="13" x2="10.6" y2="13" stroke-width="1.8"/><path d="M5.3 4 C5.8 5.5 6 7 3.3 9.5 M5.2 8 L8.6 8.8 M4.2 9 L6.6 6.8" stroke-width="1.2"/></g></svg><div class="a" style="left:1734px;top:668px;width:83px;height:28px;background:#425c8e;border-radius:2px"></div><div class="t" style="left:1746.3px;top:674.54px;font-size:13px;color:#fff;font-weight:bold;letter-spacing:-0.2px;">Azioni</div><svg class="a" style="left:1795px;top:679px" width="11" height="7" viewBox="-1 -1 11 7"><path d="M0 0 L4.5 5 L9 0" fill="none" stroke="#fff" stroke-width="1.3"/></svg><div class="a" style="left:104px;top:721px;width:18px;height:18px;background:#fff;border:1px solid #d9dde2;border-radius:2px"></div><div class="t" style="left:178px;top:720.74px;font-size:13px;color:#484848;font-weight:normal;letter-spacing:-0.1px;">2/2020</div><div class="t" style="left:552px;top:720.74px;font-size:13px;color:#484848;font-weight:normal;letter-spacing:-0.35px;">10413.44</div><div class="t" style="left:707px;top:720.74px;font-size:13px;color:#484848;font-weight:normal;letter-spacing:-0.35px;">1610.87</div><div class="t" style="left:860px;top:720.74px;font-size:13px;color:#484848;font-weight:normal;letter-spacing:-0.35px;">74.10</div><div class="t" style="left:987px;top:720.74px;font-size:13px;color:#484848;font-weight:normal;letter-spacing:-0.35px;">1536.77</div><div class="t" style="left:1109px;top:720.74px;font-size:13px;color:#484848;font-weight:normal;letter-spacing:-0.35px;">8876.67</div><div class="t" style="left:1244px;top:720.74px;font-size:13px;color:#484848;font-weight:normal;letter-spacing:-0.35px;">1269.35</div><div class="a" style="left:1361px;top:716px;width:70px;height:22px;border:1px solid #5bc580;border-radius:2px;background:#fff"></div><div class="t" style="left:1368.2px;top:723.53px;font-size:9.3px;color:#5bbf7c;font-weight:normal;">ELABORATO</div><div class="a" style="left:1554px;top:715px;width:24px;height:24px;background:#ebb935;border-radius:2px"></div><div class="a" style="left:1561px;top:726px;width:10px;height:1.3px;background:#fff"></div><div class="a" style="left:1639px;top:713px;width:27px;height:27px;background:#fff;border:1px solid #cfcfcf;border-radius:2px"></div><svg class="a" style="left:1646px;top:720px" width="12" height="15" viewBox="0 0 12 15"><g fill="none" stroke="#c9253a"><path d="M1 0.6 H10.6 V13.4 H1 Z" stroke-width="1.1"/><line x1="1" y1="13" x2="10.6" y2="13" stroke-width="1.8"/><path d="M5.3 4 C5.8 5.5 6 7 3.3 9.5 M5.2 8 L8.6 8.8 M4.2 9 L6.6 6.8" stroke-width="1.2"/></g></svg><div class="a" style="left:1734px;top:713px;width:83px;height:28px;background:#425c8e;border-radius:2px"></div><div class="t" style="left:1746.3px;top:719.54px;font-size:13px;color:#fff;font-weight:bold;letter-spacing:-0.2px;">Azioni</div><svg class="a" style="left:1795px;top:724px" width="11" height="7" viewBox="-1 -1 11 7"><path d="M0 0 L4.5 5 L9 0" fill="none" stroke="#fff" stroke-width="1.3"/></svg><div class="a" style="left:104px;top:766px;width:18px;height:18px;background:#fff;border:1px solid #d9dde2;border-radius:2px"></div><div class="t" style="left:178px;top:765.74px;font-size:13px;color:#484848;font-weight:normal;letter-spacing:-0.1px;">2/2020</div><div class="t" style="left:552px;top:765.74px;font-size:13px;color:#484848;font-weight:normal;letter-spacing:-0.35px;">790.00</div><div class="t" style="left:707px;top:765.74px;font-size:13px;color:#484848;font-weight:normal;letter-spacing:-0.35px;">124.82</div><div class="t" style="left:860px;top:765.74px;font-size:13px;color:#484848;font-weight:normal;letter-spacing:-0.35px;">5.74</div><div class="t" style="left:987px;top:765.74px;font-size:13px;color:#484848;font-weight:normal;letter-spacing:-0.35px;">119.08</div><div class="t" style="left:1109px;top:765.74px;font-size:13px;color:#484848;font-weight:normal;letter-spacing:-0.35px;">670.92</div><div class="t" style="left:1244px;top:765.74px;font-size:13px;color:#484848;font-weight:normal;letter-spacing:-0.35px;">119.08</div><div class="a" style="left:1361px;top:761px;width:70px;height:22px;border:1px solid #5bc580;border-radius:2px;background:#fff"></div><div class="t" style="left:1368.2px;top:768.53px;font-size:9.3px;color:#5bbf7c;font-weight:normal;">ELABORATO</div><div class="a" style="left:1554px;top:760px;width:24px;height:24px;background:#ebb935;border-radius:2px"></div><div class="a" style="left:1561px;top:771px;width:10px;height:1.3px;background:#fff"></div><div class="a" style="left:1639px;top:758px;width:27px;height:27px;background:#fff;border:1px solid #cfcfcf;border-radius:2px"></div><svg class="a" style="left:1646px;top:765px" width="12" height="15" viewBox="0 0 12 15"><g fill="none" stroke="#c9253a"><path d="M1 0.6 H10.6 V13.4 H1 Z" stroke-width="1.1"/><line x1="1" y1="13" x2="10.6" y2="13" stroke-width="1.8"/><path d="M5.3 4 C5.8 5.5 6 7 3.3 9.5 M5.2 8 L8.6 8.8 M4.2 9 L6.6 6.8" stroke-width="1.2"/></g></svg><div class="a" style="left:1734px;top:758px;width:83px;height:28px;background:#425c8e;border-radius:2px"></div><div class="t" style="left:1746.3px;top:764.54px;font-size:13px;color:#fff;font-weight:bold;letter-spacing:-0.2px;">Azioni</div><svg class="a" style="left:1795px;top:769px" width="11" height="7" viewBox="-1 -1 11 7"><path d="M0 0 L4.5 5 L9 0" fill="none" stroke="#fff" stroke-width="1.3"/></svg><div class="a" style="left:104px;top:811px;width:18px;height:18px;background:#fff;border:1px solid #d9dde2;border-radius:2px"></div><div class="t" style="left:178px;top:810.74px;font-size:13px;color:#484848;font-weight:normal;letter-spacing:-0.1px;">2/2020</div><div class="t" style="left:552px;top:810.74px;font-size:13px;color:#484848;font-weight:normal;letter-spacing:-0.35px;">1036.61</div><div class="t" style="left:707px;top:810.74px;font-size:13px;color:#484848;font-weight:normal;letter-spacing:-0.35px;">214.43</div><div class="t" style="left:860px;top:810.74px;font-size:13px;color:#484848;font-weight:normal;letter-spacing:-0.35px;">9.86</div><div class="t" style="left:987px;top:810.74px;font-size:13px;color:#484848;font-weight:normal;letter-spacing:-0.35px;">204.57</div><div class="t" style="left:1109px;top:810.74px;font-size:13px;color:#484848;font-weight:normal;letter-spacing:-0.35px;">832.04</div><div class="t" style="left:1244px;top:810.74px;font-size:13px;color:#484848;font-weight:normal;letter-spacing:-0.35px;">204.57</div><div class="a" style="left:1361px;top:806px;width:70px;height:22px;border:1px solid #5bc580;border-radius:2px;background:#fff"></div><div class="t" style="left:1368.2px;top:813.53px;font-size:9.3px;color:#5bbf7c;font-weight:normal;">ELABORATO</div><div class="a" style="left:1554px;top:805px;width:24px;height:24px;background:#ebb935;border-radius:2px"></div><div class="a" style="left:1561px;top:816px;width:10px;height:1.3px;background:#fff"></div><div class="a" style="left:1639px;top:803px;width:27px;height:27px;background:#fff;border:1px solid #cfcfcf;border-radius:2px"></div><svg class="a" style="left:1646px;top:810px" width="12" height="15" viewBox="0 0 12 15"><g fill="none" stroke="#c9253a"><path d="M1 0.6 H10.6 V13.4 H1 Z" stroke-width="1.1"/><line x1="1" y1="13" x2="10.6" y2="13" stroke-width="1.8"/><path d="M5.3 4 C5.8 5.5 6 7 3.3 9.5 M5.2 8 L8.6 8.8 M4.2 9 L6.6 6.8" stroke-width="1.2"/></g></svg><div class="a" style="left:1734px;top:803px;width:83px;height:28px;background:#425c8e;border-radius:2px"></div><div class="t" style="left:1746.3px;top:809.54px;font-size:13px;color:#fff;font-weight:bold;letter-spacing:-0.2px;">Azioni</div><svg class="a" style="left:1795px;top:814px" width="11" height="7" viewBox="-1 -1 11 7"><path d="M0 0 L4.5 5 L9 0" fill="none" stroke="#fff" stroke-width="1.3"/></svg><div class="a" style="left:104px;top:856px;width:18px;height:18px;background:#fff;border:1px solid #d9dde2;border-radius:2px"></div><div class="t" style="left:178px;top:855.74px;font-size:13px;color:#484848;font-weight:normal;letter-spacing:-0.1px;">2/2020</div><div class="t" style="left:552px;top:855.74px;font-size:13px;color:#484848;font-weight:normal;letter-spacing:-0.35px;">2231.24</div><div class="t" style="left:707px;top:855.74px;font-size:13px;color:#484848;font-weight:normal;letter-spacing:-0.35px;">185.75</div><div class="t" style="left:860px;top:855.74px;font-size:13px;color:#484848;font-weight:normal;letter-spacing:-0.35px;">8.55</div><div class="t" style="left:987px;top:855.74px;font-size:13px;color:#484848;font-weight:normal;letter-spacing:-0.35px;">177.21</div><div class="t" style="left:1109px;top:855.74px;font-size:13px;color:#484848;font-weight:normal;letter-spacing:-0.35px;">107.32</div><div class="t" style="left:1244px;top:855.74px;font-size:13px;color:#484848;font-weight:normal;letter-spacing:-0.35px;">177.21</div><div class="a" style="left:1361px;top:851px;width:70px;height:22px;border:1px solid #5bc580;border-radius:2px;background:#fff"></div><div class="t" style="left:1368.2px;top:858.53px;font-size:9.3px;color:#5bbf7c;font-weight:normal;">ELABORATO</div><div class="a" style="left:1554px;top:850px;width:24px;height:24px;background:#ebb935;border-radius:2px"></div><div class="a" style="left:1561px;top:861px;width:10px;height:1.3px;background:#fff"></div><div class="a" style="left:1639px;top:848px;width:27px;height:27px;background:#fff;border:1px solid #cfcfcf;border-radius:2px"></div><svg class="a" style="left:1646px;top:855px" width="12" height="15" viewBox="0 0 12 15"><g fill="none" stroke="#c9253a"><path d="M1 0.6 H10.6 V13.4 H1 Z" stroke-width="1.1"/><line x1="1" y1="13" x2="10.6" y2="13" stroke-width="1.8"/><path d="M5.3 4 C5.8 5.5 6 7 3.3 9.5 M5.2 8 L8.6 8.8 M4.2 9 L6.6 6.8" stroke-width="1.2"/></g></svg><div class="a" style="left:1734px;top:848px;width:83px;height:28px;background:#425c8e;border-radius:2px"></div><div class="t" style="left:1746.3px;top:854.54px;font-size:13px;color:#fff;font-weight:bold;letter-spacing:-0.2px;">Azioni</div><svg class="a" style="left:1795px;top:859px" width="11" height="7" viewBox="-1 -1 11 7"><path d="M0 0 L4.5 5 L9 0" fill="none" stroke="#fff" stroke-width="1.3"/></svg><div class="a" style="left:104px;top:901px;width:18px;height:18px;background:#fff;border:1px solid #d9dde2;border-radius:2px"></div><div class="t" style="left:178px;top:900.74px;font-size:13px;color:#484848;font-weight:normal;letter-spacing:-0.1px;">2/2020</div><div class="t" style="left:552px;top:900.74px;font-size:13px;color:#484848;font-weight:normal;letter-spacing:-0.35px;">210.00</div><div class="t" style="left:707px;top:900.74px;font-size:13px;color:#484848;font-weight:normal;letter-spacing:-0.35px;">57.28</div><div class="t" style="left:860px;top:900.74px;font-size:13px;color:#484848;font-weight:normal;letter-spacing:-0.35px;">2.64</div><div class="t" style="left:987px;top:900.74px;font-size:13px;color:#484848;font-weight:normal;letter-spacing:-0.35px;">54.65</div><div class="t" style="left:1109px;top:900.74px;font-size:13px;color:#484848;font-weight:normal;letter-spacing:-0.35px;">155.35</div><div class="t" style="left:1244px;top:900.74px;font-size:13px;color:#484848;font-weight:normal;letter-spacing:-0.35px;">54.65</div><div class="a" style="left:1361px;top:896px;width:70px;height:22px;border:1px solid #5bc580;border-radius:2px;background:#fff"></div><div class="t" style="left:1368.2px;top:903.53px;font-size:9.3px;color:#5bbf7c;font-weight:normal;">ELABORATO</div><div class="a" style="left:1554px;top:895px;width:24px;height:24px;background:#ebb935;border-radius:2px"></div><div class="a" style="left:1561px;top:906px;width:10px;height:1.3px;background:#fff"></div><div class="a" style="left:1639px;top:893px;width:27px;height:27px;background:#fff;border:1px solid #cfcfcf;border-radius:2px"></div><svg class="a" style="left:1646px;top:900px" width="12" height="15" viewBox="0 0 12 15"><g fill="none" stroke="#c9253a"><path d="M1 0.6 H10.6 V13.4 H1 Z" stroke-width="1.1"/><line x1="1" y1="13" x2="10.6" y2="13" stroke-width="1.8"/><path d="M5.3 4 C5.8 5.5 6 7 3.3 9.5 M5.2 8 L8.6 8.8 M4.2 9 L6.6 6.8" stroke-width="1.2"/></g></svg><div class="a" style="left:1734px;top:893px;width:83px;height:28px;background:#425c8e;border-radius:2px"></div><div class="t" style="left:1746.3px;top:899.54px;font-size:13px;color:#fff;font-weight:bold;letter-spacing:-0.2px;">Azioni</div><svg class="a" style="left:1795px;top:904px" width="11" height="7" viewBox="-1 -1 11 7"><path d="M0 0 L4.5 5 L9 0" fill="none" stroke="#fff" stroke-width="1.3"/></svg><div class="a" style="left:104px;top:946px;width:18px;height:18px;background:#fff;border:1px solid #d9dde2;border-radius:2px"></div><div class="t" style="left:178px;top:945.74px;font-size:13px;color:#484848;font-weight:normal;letter-spacing:-0.1px;">2/2020</div><div class="t" style="left:552px;top:945.74px;font-size:13px;color:#484848;font-weight:normal;letter-spacing:-0.35px;">400.80</div><div class="t" style="left:707px;top:945.74px;font-size:13px;color:#484848;font-weight:normal;letter-spacing:-0.35px;">360.72</div><div class="t" style="left:860px;top:945.74px;font-size:13px;color:#484848;font-weight:normal;letter-spacing:-0.35px;">16.59</div><div class="t" style="left:987px;top:945.74px;font-size:13px;color:#484848;font-weight:normal;letter-spacing:-0.35px;">344.13</div><div class="t" style="left:1109px;top:945.74px;font-size:13px;color:#484848;font-weight:normal;letter-spacing:-0.35px;">-344.13</div><div class="t" style="left:1244px;top:945.74px;font-size:13px;color:#484848;font-weight:normal;letter-spacing:-0.35px;">56.13</div><div class="a" style="left:1361px;top:941px;width:70px;height:22px;border:1px solid #5bc580;border-radius:2px;background:#fff"></div><div class="t" style="left:1368.2px;top:948.53px;font-size:9.3px;color:#5bbf7c;font-weight:normal;">ELABORATO</div><div class="a" style="left:1554px;top:940px;width:24px;height:24px;background:#ebb935;border-radius:2px"></div><div class="a" style="left:1561px;top:951px;width:10px;height:1.3px;background:#fff"></div><div class="a" style="left:1639px;top:938px;width:27px;height:27px;background:#fff;border:1px solid #cfcfcf;border-radius:2px"></div><svg class="a" style="left:1646px;top:945px" width="12" height="15" viewBox="0 0 12 15"><g fill="none" stroke="#c9253a"><path d="M1 0.6 H10.6 V13.4 H1 Z" stroke-width="1.1"/><line x1="1" y1="13" x2="10.6" y2="13" stroke-width="1.8"/><path d="M5.3 4 C5.8 5.5 6 7 3.3 9.5 M5.2 8 L8.6 8.8 M4.2 9 L6.6 6.8" stroke-width="1.2"/></g></svg><div class="a" style="left:1734px;top:938px;width:83px;height:28px;background:#425c8e;border-radius:2px"></div><div class="t" style="left:1746.3px;top:944.54px;font-size:13px;color:#fff;font-weight:bold;letter-spacing:-0.2px;">Azioni</div><svg class="a" style="left:1795px;top:949px" width="11" height="7" viewBox="-1 -1 11 7"><path d="M0 0 L4.5 5 L9 0" fill="none" stroke="#fff" stroke-width="1.3"/></svg><div class="a" style="left:104px;top:991px;width:18px;height:18px;background:#fff;border:1px solid #d9dde2;border-radius:2px"></div><div class="t" style="left:178px;top:990.74px;font-size:13px;color:#484848;font-weight:normal;letter-spacing:-0.1px;">2/2020</div><div class="t" style="left:552px;top:990.74px;font-size:13px;color:#484848;font-weight:normal;letter-spacing:-0.35px;">1680.00</div><div class="t" style="left:707px;top:990.74px;font-size:13px;color:#484848;font-weight:normal;letter-spacing:-0.35px;">331.84</div><div class="t" style="left:860px;top:990.74px;font-size:13px;color:#484848;font-weight:normal;letter-spacing:-0.35px;">15.27</div><div class="t" style="left:987px;top:990.74px;font-size:13px;color:#484848;font-weight:normal;letter-spacing:-0.35px;">316.58</div><div class="t" style="left:1109px;top:990.74px;font-size:13px;color:#484848;font-weight:normal;letter-spacing:-0.35px;">1363.42</div><div class="t" style="left:1244px;top:990.74px;font-size:13px;color:#484848;font-weight:normal;letter-spacing:-0.35px;">263.66</div><div class="a" style="left:1361px;top:986px;width:70px;height:22px;border:1px solid #5bc580;border-radius:2px;background:#fff"></div><div class="t" style="left:1368.2px;top:993.53px;font-size:9.3px;color:#5bbf7c;font-weight:normal;">ELABORATO</div><div class="a" style="left:1554px;top:985px;width:24px;height:24px;background:#ebb935;border-radius:2px"></div><div class="a" style="left:1561px;top:996px;width:10px;height:1.3px;background:#fff"></div><div class="a" style="left:1639px;top:983px;width:27px;height:27px;background:#fff;border:1px solid #cfcfcf;border-radius:2px"></div><svg class="a" style="left:1646px;top:990px" width="12" height="15" viewBox="0 0 12 15"><g fill="none" stroke="#c9253a"><path d="M1 0.6 H10.6 V13.4 H1 Z" stroke-width="1.1"/><line x1="1" y1="13" x2="10.6" y2="13" stroke-width="1.8"/><path d="M5.3 4 C5.8 5.5 6 7 3.3 9.5 M5.2 8 L8.6 8.8 M4.2 9 L6.6 6.8" stroke-width="1.2"/></g></svg><div class="a" style="left:1734px;top:983px;width:83px;height:28px;background:#425c8e;border-radius:2px"></div><div class="t" style="left:1746.3px;top:989.54px;font-size:13px;color:#fff;font-weight:bold;letter-spacing:-0.2px;">Azioni</div><svg class="a" style="left:1795px;top:994px" width="11" height="7" viewBox="-1 -1 11 7"><path d="M0 0 L4.5 5 L9 0" fill="none" stroke="#fff" stroke-width="1.3"/></svg><div class="a" style="left:104px;top:1036px;width:18px;height:18px;background:#fff;border:1px solid #d9dde2;border-radius:2px"></div><div class="t" style="left:178px;top:1035.74px;font-size:13px;color:#484848;font-weight:normal;letter-spacing:-0.1px;">2/2020</div><div class="t" style="left:552px;top:1035.74px;font-size:13px;color:#484848;font-weight:normal;letter-spacing:-0.35px;">333.00</div><div class="t" style="left:707px;top:1035.74px;font-size:13px;color:#484848;font-weight:normal;letter-spacing:-0.35px;">21.98</div><div class="t" style="left:860px;top:1035.74px;font-size:13px;color:#484848;font-weight:normal;letter-spacing:-0.35px;">1.01</div><div class="t" style="left:987px;top:1035.74px;font-size:13px;color:#484848;font-weight:normal;letter-spacing:-0.35px;">20.97</div><div class="t" style="left:1109px;top:1035.74px;font-size:13px;color:#484848;font-weight:normal;letter-spacing:-0.35px;">312.03</div><div class="t" style="left:1244px;top:1035.74px;font-size:13px;color:#484848;font-weight:normal;letter-spacing:-0.35px;">20.97</div><div class="a" style="left:1361px;top:1031px;width:70px;height:22px;border:1px solid #5bc580;border-radius:2px;background:#fff"></div><div class="t" style="left:1368.2px;top:1038.53px;font-size:9.3px;color:#5bbf7c;font-weight:normal;">ELABORATO</div><div class="a" style="left:1554px;top:1030px;width:24px;height:24px;background:#ebb935;border-radius:2px"></div><div class="a" style="left:1561px;top:1041px;width:10px;height:1.3px;background:#fff"></div><div class="a" style="left:1639px;top:1028px;width:27px;height:27px;background:#fff;border:1px solid #cfcfcf;border-radius:2px"></div><svg class="a" style="left:1646px;top:1035px" width="12" height="15" viewBox="0 0 12 15"><g fill="none" stroke="#c9253a"><path d="M1 0.6 H10.6 V13.4 H1 Z" stroke-width="1.1"/><line x1="1" y1="13" x2="10.6" y2="13" stroke-width="1.8"/><path d="M5.3 4 C5.8 5.5 6 7 3.3 9.5 M5.2 8 L8.6 8.8 M4.2 9 L6.6 6.8" stroke-width="1.2"/></g></svg><div class="a" style="left:1734px;top:1028px;width:83px;height:28px;background:#425c8e;border-radius:2px"></div><div class="t" style="left:1746.3px;top:1034.54px;font-size:13px;color:#fff;font-weight:bold;letter-spacing:-0.2px;">Azioni</div><svg class="a" style="left:1795px;top:1039px" width="11" height="7" viewBox="-1 -1 11 7"><path d="M0 0 L4.5 5 L9 0" fill="none" stroke="#fff" stroke-width="1.3"/></svg><div class="a" style="left:104px;top:1081px;width:18px;height:18px;background:#fff;border:1px solid #d9dde2;border-radius:2px"></div><div class="a" style="left:1361px;top:1076px;width:70px;height:22px;border:1px solid #5bc580;border-radius:2px;background:#fff"></div><div class="t" style="left:1368.2px;top:1083.53px;font-size:9.3px;color:#5bbf7c;font-weight:normal;">ELABORATO</div><div class="a" style="left:1554px;top:1075px;width:24px;height:24px;background:#ebb935;border-radius:2px"></div><div class="a" style="left:1561px;top:1086px;width:10px;height:1.3px;background:#fff"></div><div class="a" style="left:1639px;top:1073px;width:27px;height:27px;background:#fff;border:1px solid #cfcfcf;border-radius:2px"></div><svg class="a" style="left:1646px;top:1080px" width="12" height="15" viewBox="0 0 12 15"><g fill="none" stroke="#c9253a"><path d="M1 0.6 H10.6 V13.4 H1 Z" stroke-width="1.1"/><line x1="1" y1="13" x2="10.6" y2="13" stroke-width="1.8"/><path d="M5.3 4 C5.8 5.5 6 7 3.3 9.5 M5.2 8 L8.6 8.8 M4.2 9 L6.6 6.8" stroke-width="1.2"/></g></svg><div class="a" style="left:1734px;top:1073px;width:83px;height:28px;background:#425c8e;border-radius:2px"></div><div class="t" style="left:1746.3px;top:1079.54px;font-size:13px;color:#fff;font-weight:bold;letter-spacing:-0.2px;">Azioni</div><svg class="a" style="left:1795px;top:1084px" width="11" height="7" viewBox="-1 -1 11 7"><path d="M0 0 L4.5 5 L9 0" fill="none" stroke="#fff" stroke-width="1.3"/></svg><div class="a" style="left:354px;top:440px;width:176px;height:640px;background:#fff;filter:blur(2px)"></div><div class="a" style="left:362px;top:452px;width:95px;height:11px;background:#cbcbcb;filter:blur(3.5px);border-radius:5px"></div><div class="a" style="left:362px;top:497px;width:21px;height:11px;background:#e0e0e0;filter:blur(3.5px);border-radius:5px"></div><div class="a" style="left:362px;top:542px;width:21px;height:11px;background:#e0e0e0;filter:blur(3.5px);border-radius:5px"></div><div class="a" style="left:362px;top:587px;width:24px;height:11px;background:#e2e2e2;filter:blur(3.5px);border-radius:5px"></div><div class="a" style="left:362px;top:632px;width:125px;height:11px;background:#dedede;filter:blur(3.5px);border-radius:5px"></div><div class="a" style="left:362px;top:677px;width:20px;height:11px;background:#e2e2e2;filter:blur(3.5px);border-radius:5px"></div><div class="a" style="left:362px;top:722px;width:28px;height:11px;background:#e4e4e4;filter:blur(3.5px);border-radius:5px"></div><div class="a" style="left:362px;top:767px;width:85px;height:11px;background:#e8e8e8;filter:blur(3.5px);border-radius:5px"></div><div class="a" style="left:362px;top:812px;width:61px;height:11px;background:#e4e4e4;filter:blur(3.5px);border-radius:5px"></div><div class="a" style="left:362px;top:857px;width:51px;height:11px;background:#e4e4e4;filter:blur(3.5px);border-radius:5px"></div><div class="a" style="left:362px;top:902px;width:103px;height:11px;background:#e0e0e0;filter:blur(3.5px);border-radius:5px"></div><div class="a" style="left:362px;top:947px;width:109px;height:11px;background:#dedede;filter:blur(3.5px);border-radius:5px"></div><div class="a" style="left:362px;top:992px;width:117px;height:11px;background:#e0e0e0;filter:blur(3.5px);border-radius:5px"></div><div class="a" style="left:362px;top:1037px;width:74px;height:11px;background:#e2e2e2;filter:blur(3.5px);border-radius:5px"></div><div class="a" style="left:1876px;top:384px;width:28px;height:37px;background:#fff;border:1px solid #d9d9e3;border-right:none;border-radius:2px 0 0 2px"></div><svg class="a" style="left:1882px;top:394px" width="17" height="17" viewBox="0 0 16 17"><g transform="translate(0 0) scale(0.86)" fill="none" stroke="#c7263a" stroke-width="1.3" stroke-linecap="round"><ellipse cx="8" cy="4.5" rx="3.4" ry="1.5"/><path d="M4.9 1.4 L6 3.2 M11.1 1.4 L10 3.2"/><path d="M3.7 6.7 H12.3 V11 C12.3 14.5 10.5 16.3 8 16.3 C5.5 16.3 3.7 14.5 3.7 11 Z"/><line x1="8" y1="6.8" x2="8" y2="16"/><path d="M3.7 7.6 L0.9 6.4 M12.3 7.6 L15.1 6.4 M3.7 10.9 L0.4 10.9 M12.3 10.9 L15.6 10.9 M4.2 14.3 L1.2 15.7 M11.8 14.3 L14.8 15.7"/></g></svg><div class="a" style="left:1903px;top:0px;width:17px;height:1080px;background:#f1f1f1"></div><div class="a" style="left:1905px;top:17px;width:13px;height:418px;background:#c1c1c1"></div><svg class="a" style="left:1903px;top:0" width="17" height="1080" viewBox="0 0 17 1080"><path d="M4.5 10.5 L8.5 6 L12.5 10.5 Z" fill="#a3a3a3"/><path d="M4.5 1069.5 L8.5 1074 L12.5 1069.5 Z" fill="#505050"/></svg></body></html>
